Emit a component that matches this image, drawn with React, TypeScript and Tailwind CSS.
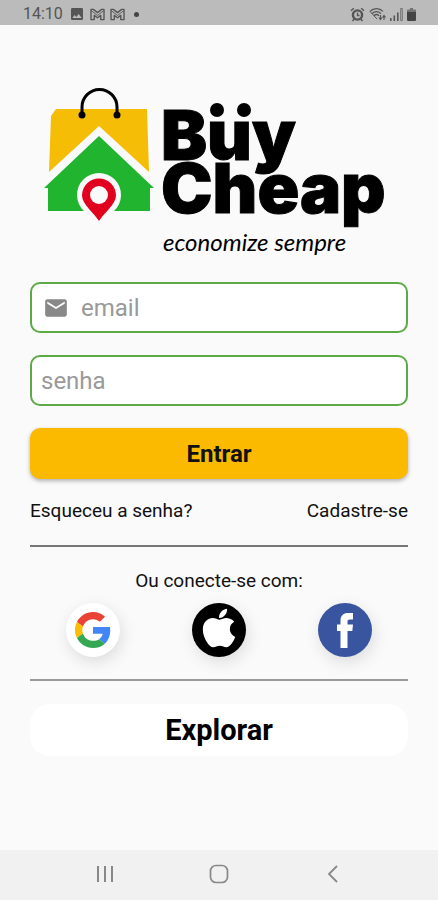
import { FaApple } from "react-icons/fa";
import { MdEmail, MdImage } from "react-icons/md";

function MailGlyph() {
  return (
    <svg viewBox="0 0 16 14" className="h-[13px] w-[15px]" fill="none" stroke="currentColor" strokeWidth="1.5" strokeLinejoin="round">
      <path d="M1 1.500h2.500L8 5l4.500-3.500H15v11h-3.500V8L8 10.500 4.500 8v4.500H1Z" />
      <path d="M1.500 3 8 8l6.500-5" strokeWidth="1" />
    </svg>
  );
}

function AlarmGlyph() {
  return (
    <svg viewBox="0 0 15 15" className="size-[15px]" fill="none" stroke="currentColor">
      <circle cx="7.500" cy="8" r="4.600" strokeWidth="2.400" />
      <path d="M7.500 5.500v3h2" strokeWidth="1.300" />
      <path d="M1 3.800 3.800 1.300M14 3.800l-2.800-2.500M2.500 14l1.800-2M12.500 14l-1.800-2" strokeWidth="1.500" />
    </svg>
  );
}

function WifiGlyph() {
  return (
    <svg viewBox="0 0 17 14" className="h-[14px] w-[17px]" fill="none" stroke="currentColor" strokeWidth="1.3">
      <path d="M1 4.400C4.500.6 10.500.6 14 4.400M3 6.600c2.600-2.700 6.400-2.700 9 0M5 8.800c1.500-1.500 3.500-1.500 5 0" />
      <path d="M1 4.400 8 12" strokeWidth="1" />
      <path d="M11.500 8v3.500M10 10.500l1.500 2 1.500-2M15 13V9.500M13.500 10.500l1.500-2 1.500 2" strokeWidth="1.100" />
    </svg>
  );
}

function SignalGlyph() {
  return (
    <svg viewBox="0 0 13 13" className="size-[13px]" fill="currentColor">
      <path d="M0 10h1.600v3H0zM3.500 7.500h1.600V13H3.500zM7 4.500h1.600V13H7z" />
      <path d="M10.700.5h1.600v12h-1.600z" fill="none" stroke="currentColor" strokeWidth=".7" />
    </svg>
  );
}

function BatteryGlyph() {
  return (
    <svg viewBox="0 0 9 13" className="h-[13px] w-[9px]" fill="#444444">
      <path d="M3 0h3v1.500h2.200L9 2.300V4H0V2.300l.8-.8H3Z" opacity=".6" />
      <path d="M0 4h9v8.200l-.8.8H.8L0 12.200Z" />
    </svg>
  );
}

function StatusBar() {
  return (
    <header className="flex h-[25px] items-center justify-between bg-[#bbbbbb] pt-[3px] pr-[22px] pl-[23px] text-[#555555]">
      <div className="flex items-center">
        <span className="text-[16px] leading-5">14:10</span>
        <MdImage className="ml-[6px] size-4" />
        <span className="ml-[5px] flex gap-[5px]">
          <MailGlyph />
          <MailGlyph />
        </span>
        <span className="ml-[9px] size-[5px] rounded-full bg-[#444444]" />
      </div>
      <div className="flex items-center gap-1">
        <AlarmGlyph />
        <WifiGlyph />
        <SignalGlyph />
        <BatteryGlyph />
      </div>
    </header>
  );
}

function Logo() {
  return (
    <svg viewBox="30 80 378 180" className="w-full" role="img" aria-label="Büy Cheap economize sempre">
      <path d="M56 109h91l2 63-50-46-50 46 2-56Z" fill="#f5bd05" />
      <path d="M99 136 154 188h-4v23H48v-23h-4Z" fill="#21b42f" />
      <path d="M82 114V107a17 17 0 0 1 35 0v7" fill="none" stroke="#000" strokeWidth="3" />
      <circle cx="82" cy="115" r="3.500" />
      <circle cx="117" cy="115" r="3.500" />
      <path d="M84 211a22 22 0 1 1 30 0l-15 14Z" fill="#fafafa" />
      <path d="M99 221C94 213 82 204 82 195.500a17 17 0 0 1 34 0C116 204 104 213 99 221Z" fill="#e2001f" />
      <circle cx="99" cy="195" r="9" fill="#fafafa" />
      <g className="font-['Inter',sans-serif] text-[69px] font-black" stroke="#000" strokeWidth="1">
        <text x="161" y="160">Buy</text>
        <text x="161" y="213">Cheap</text>
      </g>
      <circle cx="217" cy="110" r="7" />
      <circle cx="244" cy="110" r="7" />
      <text x="163" y="251" className="font-['Lato',sans-serif] text-[24px] italic">
        economize sempre
      </text>
    </svg>
  );
}

function SocialLogins() {
  const circle = "flex size-[54px] items-center justify-center rounded-full shadow-[2px_5px_16px_rgba(0,0,0,0.12)]";
  return (
    <div className="grid grid-cols-3 justify-items-center">
      <button type="button" aria-label="Google" className={`${circle} bg-white`}>
        <svg viewBox="0 0 48 48" className="size-9">
          <path fill="#ea4335" d="M24 9.500c3.540 0 6.710 1.220 9.210 3.600l6.850-6.850C35.900 2.380 30.470 0 24 0 14.620 0 6.510 5.380 2.560 13.220l7.980 6.190C12.430 13.720 17.740 9.500 24 9.500z" />
          <path fill="#4285f4" d="M46.980 24.550c0-1.570-.15-3.090-.38-4.550H24v9.020h12.940c-.58 2.960-2.260 5.480-4.780 7.180l7.730 6c4.510-4.180 7.090-10.360 7.090-17.650z" />
          <path fill="#fbbc05" d="M10.530 28.590c-.48-1.450-.76-2.990-.76-4.590s.27-3.140.76-4.590l-7.980-6.190C.92 16.460 0 20.120 0 24c0 3.880.92 7.540 2.560 10.780l7.970-6.190z" />
          <path fill="#34a853" d="M24 48c6.480 0 11.930-2.130 15.890-5.810l-7.730-6c-2.150 1.450-4.920 2.300-8.160 2.300-6.260 0-11.570-4.220-13.470-9.910l-7.980 6.190C6.510 42.620 14.620 48 24 48z" />
        </svg>
      </button>
      <button type="button" aria-label="Apple" className={`${circle} bg-black pb-1 text-white`}>
        <FaApple className="size-11" />
      </button>
      <button type="button" aria-label="Facebook" className={`${circle} bg-[#3a559f] text-white`}>
        <svg viewBox="0 0 54 54" className="size-full" fill="currentColor">
          <path d="M22.500 45V28H19v-6.500h3.500v-4C22.500 12.500 25.500 10 30 10h5v6.500h-3.200c-1.600 0-2.300.8-2.300 2.300v2.700H35L34.300 28h-4.800v17Z" />
        </svg>
      </button>
    </div>
  );
}

function NavigationBar() {
  return (
    <nav className="flex h-[50px] items-center bg-[#f1f1f1] px-12 pb-[2px] text-[#888888]">
      <button type="button" aria-label="Recentes" className="flex flex-1 justify-center">
        <svg viewBox="0 0 20 20" className="size-5" stroke="currentColor" strokeWidth="2">
          <path d="M3 2v16M10 2v16M17 2v16" />
        </svg>
      </button>
      <button type="button" aria-label="Início" className="flex flex-1 justify-center">
        <svg viewBox="0 0 20 20" className="size-5" fill="none" stroke="currentColor" strokeWidth="1.700">
          <rect x="1.500" y="1.500" width="17" height="17" rx="5.500" />
        </svg>
      </button>
      <button type="button" aria-label="Voltar" className="flex flex-1 justify-center">
        <svg viewBox="0 0 20 20" className="size-5" fill="none" stroke="currentColor" strokeWidth="1.800">
          <path d="m14 2-8 8 8 8" />
        </svg>
      </button>
    </nav>
  );
}

export default function App() {
  return (
    <div className="flex min-h-screen flex-col bg-[#fafafa] font-['Roboto',sans-serif] text-[#111111]">
      <StatusBar />
      <main className="flex-1 px-[30px] pt-[55px]">
        <Logo />
        <form className="mt-[22px] flex flex-col gap-[22px]" onSubmit={(e) => e.preventDefault()}>
          <label className="flex h-[51px] items-center rounded-[10px] border-2 border-[#5baa45] bg-white pl-[11px]">
            <MdEmail className="size-[26px] shrink-0 text-[#888888]" />
            <input type="email" aria-label="email" placeholder="email" className="ml-3 min-w-0 flex-1 text-[24px] outline-none placeholder:text-[#999999]" />
          </label>
          <label className="flex h-[51px] items-center rounded-[10px] border-2 border-[#5baa45] bg-white pl-[9px]">
            <input type="password" aria-label="senha" placeholder="senha" className="min-w-0 flex-1 text-[24px] outline-none placeholder:text-[#999999]" />
          </label>
          <button type="submit" className="h-[51px] rounded-[10px] bg-[#fbb900] text-[24px] font-bold shadow-[0_2px_4px_rgba(0,0,0,0.3)]">
            Entrar
          </button>
        </form>
        <div className="mt-5 flex justify-between text-[19px] leading-6">
          <a href="#senha">Esqueceu a senha?</a>
          <a href="#cadastro">Cadastre-se</a>
        </div>
        <hr className="mt-[22px] border-t-2 border-[#777777]" />
        <p className="mt-[22px] mb-[10px] text-center text-[19px] leading-6">Ou conecte-se com:</p>
        <SocialLogins />
        <hr className="mt-[22px] border-t-2 border-[#999999]" />
        <button type="button" className="mt-[23px] h-[52px] w-full rounded-[20px] bg-white pt-[2px] text-[29px] font-bold text-black">
          Explorar
        </button>
      </main>
      <NavigationBar />
    </div>
  );
}
